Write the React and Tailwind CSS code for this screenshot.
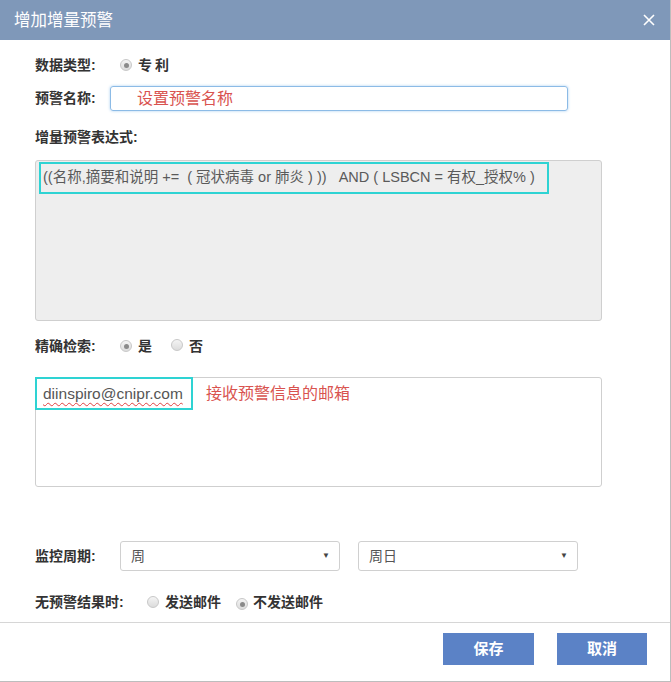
import React from "react"

const Radio = ({ checked }) => (
  <span className="inline-flex h-[12px] w-[12px] items-center justify-center rounded-full border border-[#c8c8c8] bg-gradient-to-b from-[#f4f4f4] to-[#dcdcdc]">
    {checked && <span className="h-[5px] w-[5px] rounded-full bg-[#8a8a8a]" />}
  </span>
)

const Select = ({ value, className }) => (
  <div className={"flex h-[30px] items-center justify-between rounded-[3px] border border-[#d0d0d0] bg-white pl-[10px] pr-[9px] text-[14px] text-[#555] " + className}>
    <span>{value}</span>
    <span className="text-[8px] text-[#444]">▼</span>
  </div>
)

export default function App() {
  return (
    <div
      className="relative h-[682px] w-[671px] overflow-hidden border-r border-b border-[#bdbdbd] bg-white text-[#333]"
      style={{ fontFamily: '"Liberation Sans", "Noto Sans CJK SC", sans-serif' }}
    >
      {/* header */}
      <div className="flex h-[40px] items-center justify-between bg-[#7f98b9] pl-[14px] pr-[14px] text-white">
        <span className="text-[16.5px]">增加增量预警</span>
        <svg width="12" height="12" viewBox="0 0 12 12" className="mr-[1px]">
          <path d="M1 1 L11 11 M11 1 L1 11" stroke="white" strokeWidth="1.6" />
        </svg>
      </div>

      <div className="pl-[35px] pr-[69px]">
        {/* 数据类型 */}
        <div className="mt-[15px] flex h-[20px] items-center text-[14px]">
          <span className="w-[85px] font-bold">数据类型:</span>
          <Radio checked />
          <span className="ml-[6px] font-bold tracking-[3px]">专利</span>
        </div>

        {/* 预警名称 */}
        <div className="mt-[11px] flex items-center text-[14px]">
          <span className="w-[75px] font-bold">预警名称:</span>
          <div className="flex h-[25px] w-[458px] items-center rounded-[3px] border border-[#8cbbe6] pl-[26px] shadow-[0_0_3px_#a9cff0]">
            <span className="text-[16px] text-[#d9534f]">设置预警名称</span>
          </div>
        </div>

        {/* 增量预警表达式 */}
        <div className="mt-[16px] text-[14px] font-bold">增量预警表达式:</div>

        <div className="mt-[12px] h-[161px] w-[567px] rounded-[3px] border border-[#cfcfcf] bg-[#eeeeee] pt-[1px] pl-[3px]">
          <div className="flex h-[32px] w-[510px] items-center border-[2px] border-[#2ed3d3] pl-[2px] text-[14.5px] text-[#5a5a5a] whitespace-nowrap">
            ((名称,摘要和说明 +=&nbsp; ( 冠状病毒 or 肺炎 ) ))&nbsp;&nbsp; AND ( LSBCN = 有权_授权% )
          </div>
        </div>

        {/* 精确检索 */}
        <div className="mt-[15px] flex h-[20px] items-center text-[14px]">
          <span className="w-[85px] font-bold">精确检索:</span>
          <Radio checked />
          <span className="ml-[6px] font-bold">是</span>
          <span className="ml-[19px]"><Radio /></span>
          <span className="ml-[6px] font-bold">否</span>
        </div>

        {/* 邮箱 */}
        <div className="mt-[21px] h-[110px] w-[567px] rounded-[3px] border border-[#cfcfcf] bg-white">
          <div className="flex items-center">
            <div className="-ml-[1px] -mt-[1px] flex h-[33px] w-[158px] items-center border-[2px] border-[#2ed3d3] pl-[6px] text-[15.5px] text-[#555]">
              <span className="underline decoration-wavy decoration-[#e04040] decoration-1 underline-offset-[3px]">diinspiro@cnipr.com</span>
            </div>
            <span className="ml-[13px] text-[16px] text-[#d9534f]">接收预警信息的邮箱</span>
          </div>
        </div>

        {/* 监控周期 */}
        <div className="mt-[54px] flex items-center text-[14px]">
          <span className="w-[85px] font-bold">监控周期:</span>
          <Select value="周" className="w-[220px]" />
          <Select value="周日" className="ml-[18px] w-[220px]" />
        </div>

        {/* 无预警结果时 */}
        <div className="mt-[21px] flex h-[20px] items-center text-[14px]">
          <span className="w-[112px] font-bold">无预警结果时:</span>
          <Radio />
          <span className="ml-[6px] font-bold">发送邮件</span>
          <span className="ml-[15px]"><Radio checked /></span>
          <span className="ml-[5px] font-bold">不发送邮件</span>
        </div>
      </div>

      {/* footer */}
      <div className="mt-[10px] flex justify-end gap-[23px] border-t border-[#d6d6d6] pt-[10px] pr-[23px]">
        <button className="h-[32px] w-[91px] bg-[#5b82c6] text-[15px] font-bold text-white">保存</button>
        <button className="h-[32px] w-[90px] bg-[#5b82c6] text-[15px] font-bold text-white">取消</button>
      </div>
    </div>
  )
}
